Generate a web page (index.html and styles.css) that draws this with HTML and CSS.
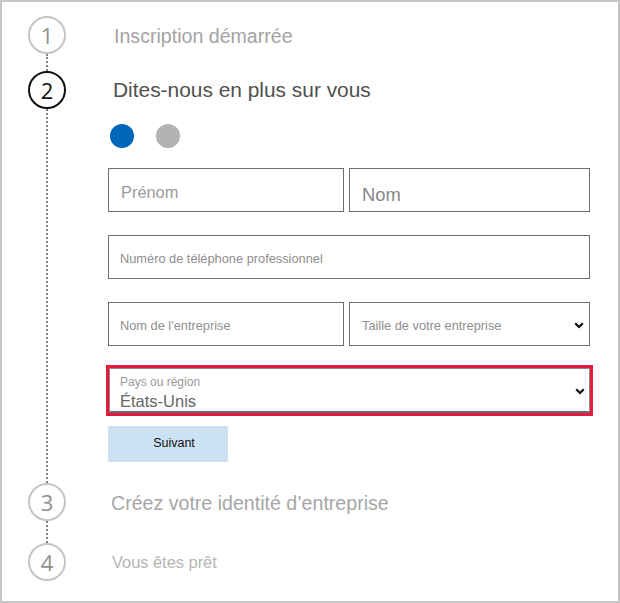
FILE: index.html
```html
<!DOCTYPE html>
<html lang="fr">
<head>
<meta charset="utf-8">
<title>Inscription</title>
<link rel="stylesheet" href="styles.css">
</head>
<body>
<div class="frame">
  <div class="step step-1">
    <div class="rail">
      <div class="circle circle-muted">1</div>
      <div class="line line-short"></div>
    </div>
    <div class="content">
      <div class="title title-done">Inscription démarrée</div>
    </div>
  </div>

  <div class="step step-2">
    <div class="rail">
      <div class="circle circle-active">2</div>
      <div class="line"></div>
    </div>
    <div class="content content-form">
      <div class="title title-active">Dites-nous en plus sur vous</div>
      <div class="dots">
        <span class="dot dot-on"></span>
        <span class="dot dot-off"></span>
      </div>
      <div class="row row-split">
        <div class="field field-first"><span class="ph ph-first">Prénom</span></div>
        <div class="field field-last"><span class="ph ph-last">Nom</span></div>
      </div>
      <div class="row">
        <div class="field field-full"><span class="ph ph-small">Numéro de téléphone professionnel</span></div>
      </div>
      <div class="row row-split">
        <div class="field field-first"><span class="ph ph-small">Nom de l'entreprise</span></div>
        <div class="field field-last field-select">
          <span class="ph ph-small">Taille de votre entreprise</span>
          <svg class="chev" width="10" height="7" viewBox="0 0 10 7"><polyline points="1.2,1.2 5,5 8.8,1.2" fill="none" stroke="#111" stroke-width="2.2"/></svg>
        </div>
      </div>
      <div class="highlight">
        <div class="field field-country field-select">
          <div class="country-text">
            <span class="country-label">Pays ou région</span>
            <span class="country-value">États-Unis</span>
          </div>
          <svg class="chev" width="10" height="7" viewBox="0 0 10 7"><polyline points="1.2,1.2 5,5 8.8,1.2" fill="none" stroke="#111" stroke-width="2.2"/></svg>
        </div>
      </div>
      <button class="next" type="button">Suivant</button>
    </div>
  </div>

  <div class="step step-3">
    <div class="rail">
      <div class="circle circle-muted">3</div>
      <div class="line line-mid"></div>
    </div>
    <div class="content">
      <div class="title title-todo">Créez votre identité d’entreprise</div>
    </div>
  </div>

  <div class="step step-4">
    <div class="rail">
      <div class="circle circle-muted">4</div>
    </div>
    <div class="content">
      <div class="title title-last">Vous êtes prêt</div>
    </div>
  </div>
</div>
</body>
</html>
```

FILE: styles.css
```css
* { box-sizing: border-box; }

html, body {
  margin: 0;
  padding: 0;
  background: #ffffff;
}

body {
  font-family: "Liberation Sans", Arial, sans-serif;
}

.frame {
  width: 620px;
  height: 603px;
  border: 2px solid #c6c6c6;
  padding-top: 14px;
  display: flex;
  flex-direction: column;
  background: #fff;
}

.step {
  display: grid;
  grid-template-columns: 38px 1fr;
  column-gap: 42px;
  padding-left: 26px;
}

.rail {
  display: flex;
  flex-direction: column;
  align-items: center;
}

.circle {
  width: 38px;
  height: 38px;
  flex: none;
  border-radius: 50%;
  border: 2px solid #c4c4c4;
  display: flex;
  align-items: center;
  justify-content: center;
  font-family: "Open Sans", "Noto Sans", sans-serif;
  font-size: 22px;
  line-height: 1;
  color: #8f8f8f;
  padding-bottom: 1px;
}

.circle-active {
  border-color: #111;
  color: #111;
}

.line {
  flex: 1;
  width: 0;
  border-left: 2px dotted #858585;
}

.line-short { min-height: 17px; }
.line-mid { min-height: 22px; }

.content {
  display: flex;
  flex-direction: column;
}

.title {
  height: 38px;
  display: flex;
  align-items: center;
  white-space: nowrap;
}

.title-done {
  font-size: 19.6px;
  color: #a3a3a3;
  padding-left: 6px;
  padding-top: 2px;
}

.title-active {
  font-size: 20.9px;
  color: #505050;
  padding-left: 5px;
}

.title-todo {
  font-size: 19.6px;
  color: #a6a6a6;
  padding-left: 3px;
  padding-top: 3px;
}

.title-last {
  font-size: 16.4px;
  color: #b5b5b5;
  padding-left: 4px;
}

.content-form {
  padding-bottom: 21px;
  width: 482px;
}

.dots {
  display: flex;
  gap: 22px;
  margin-top: 15px;
  padding-left: 2px;
}

.dot {
  width: 24px;
  height: 24px;
  border-radius: 50%;
  display: block;
}

.dot-on { background: #0067b8; }
.dot-off { background: #b3b3b3; }

.row {
  display: flex;
  margin-top: 23px;
}

.dots + .row { margin-top: 20px; }

.row-split { gap: 5px; }

.field {
  height: 44px;
  border: 1px solid #6e6e6e;
  display: flex;
  align-items: center;
  background: #fff;
}

.field-first {
  width: 236px;
  padding-left: 12px;
}

.field-last {
  width: 241px;
  padding-left: 12px;
}

.field-full {
  width: 482px;
  padding-left: 11px;
}

.field-first .ph-small { margin-left: -1px; }

.ph {
  white-space: nowrap;
  color: #9b9b9b;
}

.ph-first {
  font-size: 16.4px;
  margin-top: 4px;
}

.ph-last {
  font-size: 18.4px;
  color: #878787;
  margin-top: 9px;
}

.ph-small {
  font-size: 12.8px;
  color: #8e8e8e;
  margin-top: 3px;
}

.field-select {
  justify-content: space-between;
  padding-right: 5px;
}

.field-select .ph-small { margin-top: 3px; }
.field-select .chev { margin-top: 2px; }

.chev { display: block; flex: none; }

.highlight {
  margin-top: 19px;
  margin-left: -2px;
  width: 487px;
  border: 3px solid #e8193c;
  height: 51px;
}

.field-country {
  width: 481px;
  height: 45px;
  border-color: #8a8a8a;
  border-bottom: 2px solid #6a6a6a;
  padding-left: 10px;
  padding-right: 4px;
}

.country-text {
  display: flex;
  flex-direction: column;
  line-height: 1;
  padding-top: 5px;
}

.country-label {
  font-size: 12px;
  color: #999;
}

.country-value {
  font-size: 16.5px;
  color: #666;
  margin-top: 5px;
}

.next {
  margin-top: 10px;
  width: 120px;
  height: 36px;
  border: none;
  border-radius: 2px;
  background: #cce1f2;
  color: #111;
  font-family: "Liberation Sans", Arial, sans-serif;
  font-size: 12.5px;
  padding: 0 0 2px 12px;
}
```
